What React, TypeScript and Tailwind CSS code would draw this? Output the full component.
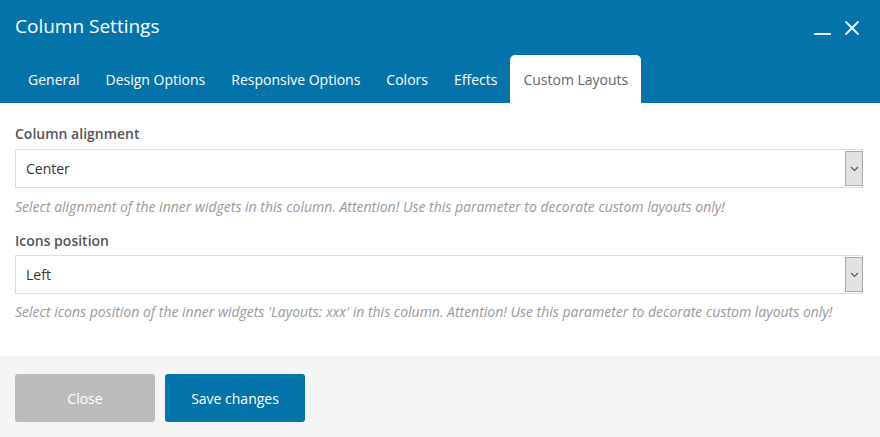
import React from "react";

function Chevron() {
  return (
    <svg width="9" height="6" viewBox="0 0 9 6" fill="none">
      <path d="M1 1l3.5 3.5L8 1" stroke="#555" strokeWidth="1.1" />
    </svg>
  );
}

function Select({ value }: { value: string }) {
  return (
    <div className="flex h-[39px] border border-[#dcdcdc] bg-white">
      <div className="flex-1 flex items-center pl-[10px] text-[14px] text-[#333]">{value}</div>
      <div className="w-[18px] my-[1px] mr-[-1px] flex items-center justify-center bg-[#e2e2e2] border border-[#a9a9a9]">
        <Chevron />
      </div>
    </div>
  );
}

export default function App() {
  const tabs = ["General", "Design Options", "Responsive Options", "Colors", "Effects", "Custom Layouts"];
  const active = 5;
  return (
    <div className="w-[880px] h-[437px] flex flex-col bg-white" style={{ fontFamily: '"Open Sans", sans-serif' }}>
      <div className="bg-[#0473aa] h-[103px] flex flex-col">
        <div className="flex items-start justify-between h-[55px] pl-[15px] pr-[20px]">
          <div className="text-white text-[19px] mt-[12px] leading-[28px]">Column Settings</div>
          <div className="flex items-center gap-[13px] mt-[19px]">
            <svg width="17" height="17" viewBox="0 0 17 17">
              <rect x="0" y="14" width="17" height="2" fill="#e6eef5" />
            </svg>
            <svg width="16" height="16" viewBox="0 0 16 16">
              <path d="M1.5 1.5l13 13M14.5 1.5l-13 13" stroke="#e6eef5" strokeWidth="2" />
            </svg>
          </div>
        </div>
        <div className="flex pl-[15px] h-[48px]">
          {tabs.map((t, i) => (
            <div
              key={t}
              className={
                i === active
                  ? "px-[13px] flex items-center bg-white rounded-t-[5px] text-[#666] text-[14px]"
                  : "px-[13px] flex items-center text-white text-[14px]"
              }
            >
              {t}
            </div>
          ))}
        </div>
      </div>
      <div className="flex-1 pl-[15px] pr-[17px] pt-[21px]">
        <div className="text-[14px] font-semibold text-[#555] leading-[19px] mb-[6px]">Column alignment</div>
        <Select value="Center" />
        <div className="text-[14px] italic text-[#9a9a9a] mt-[9px] leading-[19px]">
          Select alignment of the inner widgets in this column. Attention! Use this parameter to decorate custom layouts only!
        </div>
        <div className="text-[14px] font-semibold text-[#555] leading-[19px] mt-[15px] mb-[5px]">Icons position</div>
        <Select value="Left" />
        <div className="text-[14px] italic text-[#9a9a9a] mt-[8px] leading-[19px]">
          Select icons position of the inner widgets 'Layouts: xxx' in this column. Attention! Use this parameter to decorate custom layouts only!
        </div>
      </div>
      <div className="h-[81px] bg-[#f5f5f5] flex items-start gap-[10px] px-[15px] pt-[18px]">
        <button className="w-[140px] h-[48px] rounded-[3px] bg-[#bcbcbc] text-white text-[14px]">Close</button>
        <button className="w-[140px] h-[48px] rounded-[3px] bg-[#0473aa] text-white text-[14px]">Save changes</button>
      </div>
    </div>
  );
}
